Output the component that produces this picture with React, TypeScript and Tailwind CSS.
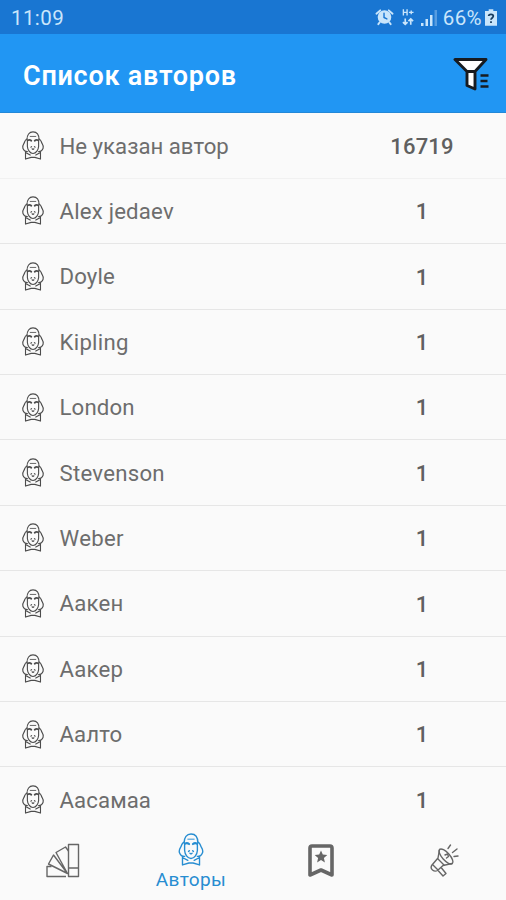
const authors: [string, number, string][] = [
  ['Не указан автор', 16719, 'tracking-[0px]'],
  ['Alex jedaev', 1, 'tracking-[0.2px]'],
  ['Doyle', 1, 'tracking-[0.15px]'],
  ['Kipling', 1, 'tracking-[0.28px]'],
  ['London', 1, 'tracking-[0.15px]'],
  ['Stevenson', 1, 'tracking-[0.25px]'],
  ['Weber', 1, 'tracking-[0.3px]'],
  ['Аакен', 1, 'tracking-[0.2px]'],
  ['Аакер', 1, 'tracking-[0.2px]'],
  ['Аалто', 1, 'tracking-[0.1px]'],
  ['Аасамаа', 1, 'tracking-[0.1px]'],
];

function AuthorIcon({ className }: { className: string }) {
  return (
    <svg viewBox="0 0 24 31" fill="none" stroke="currentColor" strokeLinejoin="round" strokeLinecap="round" className={className}>
      <path d="M5.500 9.500C5.500 4 8 1 12 1s6.500 3 6.500 8.500" />
      <path d="M5.500 8.500C3 9.500 3.500 11.500 2.200 13.500S.5 16.500 1.200 18.500 3 22 6 22M18.500 8.500c2.500 1 2 3 3.300 5s1.700 3 1 5-1.800 3.500-4.800 3.500" />
      <path d="M6 10v6.500c.3 3.500 2.500 7.500 6 7.500s5.700-4 6-7.500V10" />
      <path d="M9 5.800h6" strokeWidth=".9" />
      <path d="M6.500 10c1.200-.8 2.500-.6 3.700.4M17.500 10c-1.200-.8-2.500-.6-3.700.4" strokeWidth="1.900" />
      <path d="M9.700 17.300l.8-.6M14.300 17.300l-.8-.6M11 19l1 .7 1-.7" />
      <path d="M4 22.200v7.800l6-1.800h4l6 1.800v-7.800M4 23l5 2.700M20 23l-5 2.700" />
    </svg>
  );
}

function StatusBar() {
  return (
    <div className="flex h-[34px] shrink-0 items-center bg-[#1976d2] pr-[9px] pl-[11px] text-[#c9e5fb]">
      <span className="pt-[2px] text-[20.5px] tracking-[0.4px]">11:09</span>
      <svg viewBox="0 0 20 18" className="ml-auto h-[18px] w-[19px]" fill="none" stroke="currentColor" strokeLinecap="round">
        <circle cx="10" cy="9" r="7.200" fill="currentColor" stroke="none" />
        <path d="M1.500 5.500l4-3.500M18.500 5.500l-4-3.500M5 14.500l-1.500 2M15 14.500l1.500 2" strokeWidth="2" />
        <path d="M9.500 5v4.500l3 1.500" stroke="#1976d2" strokeWidth="1.500" />
      </svg>
      <svg viewBox="0 0 13 19" className="ml-[8px] h-[18px] w-[12px]" fill="none" stroke="currentColor" strokeWidth="1.500">
        <path d="M1.500 1v7M5.500 1v7M1.500 4.500h4M7.500 4.500h5M10 2.500v4" />
        <path d="M3.500 11v6M1 15l2.500 2.500L6 15M9.500 18v-6M7 14l2.500-2.500L12 14" strokeWidth="1.800" />
      </svg>
      <svg viewBox="0 0 16 16" className="mt-[2px] ml-[7px] h-[16px] w-[16px]" fill="currentColor">
        <path d="M0 13h2.500v3H0zM4.500 9H7v7H4.500zM9 5h2.500v11H9z" />
        <path d="M13.500 0H16v16h-2.500z" opacity=".35" />
      </svg>
      <span className="ml-[6px] pt-[2px] text-[20.5px] tracking-[0.4px]">66%</span>
      <svg viewBox="0 0 13 18" className="ml-[3px] h-[17px] w-[12px]">
        <path d="M4 0h5v2h4v16H0V2h4z" fill="currentColor" />
        <path d="M4 7.500C4 5 9 5 9 7.500c0 2-2.500 2-2.500 4M6.500 13v2" fill="none" stroke="#173c5e" strokeWidth="1.900" />
      </svg>
    </div>
  );
}

function FilterIcon() {
  return (
    <svg viewBox="0 0 36 34" className="mt-[3px] h-[34px] w-[36px]" strokeLinejoin="round">
      <path d="M2 1.500h31L22 13.500V31l-8-3.500v-14z" fill="#fff" />
      <path d="M2 1.500h31L22 13.500V31l-8-3.500v-14zM14 13.500h8" fill="none" stroke="#171b20" strokeWidth="2.900" />
      <path d="M27.500 17.500h8M27.500 23h7M27.500 28.500h8" stroke="#171b20" strokeWidth="2.300" />
    </svg>
  );
}

function BottomNav() {
  return (
    <nav className="grid h-[68px] shrink-0 grid-cols-[125px_132px_128px_119px] bg-[#fafafa] text-[#666]">
      <div className="flex justify-center pt-[11px]">
        <svg viewBox="0 0 34 35" className="h-[35px] w-[34px]" fill="none" stroke="currentColor" strokeWidth="1.400" strokeLinejoin="round">
          <path d="M22.500 1.500h10v32h-10zM22.500 25h10M20 33.500H1V23.500h4.500" />
          <path d="M21.500 30.500L2.500 21l5-9zM21.500 30.500L10 9.500 19.500 4l3 4" />
        </svg>
      </div>
      <div className="flex flex-col items-center pt-px text-[#278dd1]">
        <AuthorIcon className="h-[33px] w-[26px] stroke-[1.300]" />
        <span className="mt-[3px] text-[19px] leading-[22px] tracking-[0.4px]">Авторы</span>
      </div>
      <div className="flex justify-center pt-[12px]">
        <svg viewBox="0 0 26 34" className="h-[34px] w-[26px]" fill="none" stroke="currentColor" strokeWidth="3.600" strokeLinejoin="round">
          <path d="M2 31V4q0-2 2-2h18q2 0 2 2v27l-11-5z" />
          <path d="M13 6.500l1.800 4 4.500.4-3.400 3 1 4.500L13 16l-3.900 2.400 1-4.500-3.400-3 4.500-.4z" fill="currentColor" stroke="none" />
        </svg>
      </div>
      <div className="flex justify-center pt-[12px]">
        <svg viewBox="0 0 29 34" className="h-[34px] w-[29px]" fill="none" stroke="currentColor" strokeWidth="1.400" strokeLinejoin="round" strokeLinecap="round">
          <path d="M9.500 5.500L8 14 2 21q-2 3 .5 5t5 .5L13 21.500l9-2" />
          <ellipse cx="16" cy="12.500" rx="3.800" ry="9.500" transform="rotate(-42 16 12.500)" />
          <path d="M8 15l6 6M15 11l2.500-1 1 2.500-2 1.500M3 21l4.500 4.500M8.500 27l4.500 5 3-2.500-4.500-5.500M18 4.500L20.500 1M22.500 8.500L27 5M24 12.500l4-.5" />
        </svg>
      </div>
    </nav>
  );
}

export default function App() {
  return (
    <div className="flex h-[900px] w-[506px] flex-col overflow-hidden bg-[#fafafa] font-['Roboto',sans-serif]">
      <StatusBar />
      <header className="flex h-[79px] shrink-0 items-center justify-between border-b border-[#2388d8] bg-[#2196f3] pr-[17px] pl-[23px] text-white">
        <h1 className="pt-[6px] text-[27px] font-semibold tracking-[0.75px]">Список авторов</h1>
        <FilterIcon />
      </header>
      <main className="h-[719px] shrink-0 overflow-hidden pt-[0.4px] text-[#6d6d6d]">
        {authors.map(([name, count, tracking]) => (
          <div key={name} className="flex h-[65.4px] items-center border-b border-[#e6e6e6] pl-[21px] first:border-[#f1f1f1] last:border-transparent">
            <AuthorIcon className="h-[29px] w-[24px] shrink-0 stroke-[1.200] text-[#4c4c4c]" />
            <span className={`ml-[14.500px] w-[262.500px] shrink-0 pt-[1.500px] text-[22.2px] ${tracking}`}>{name}</span>
            <span className="w-[200px] shrink-0 pt-[1.500px] text-center text-[22px] font-medium tracking-[0.2px] text-[#606060]">{count}</span>
          </div>
        ))}
      </main>
      <BottomNav />
    </div>
  );
}
